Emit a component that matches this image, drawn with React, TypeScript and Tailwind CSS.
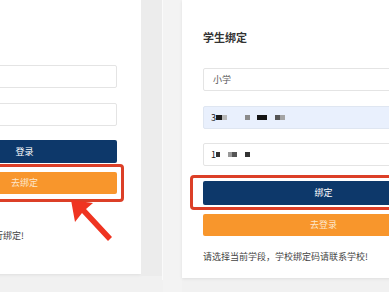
const font = { fontFamily: '"Noto Sans CJK SC", "Noto Sans", sans-serif' };

function Blob({ w, c, ml = 0 }: { w: number; c: string; ml?: number }) {
    return (
        <span
            className="inline-block h-[5px]"
            style={{ width: w, background: c, marginLeft: ml }}
        />
    );
}

function Field({
    children,
    tint,
}: {
    children?: React.ReactNode;
    tint?: boolean;
}) {
    return (
        <div
            className={
                'flex h-[23px] items-center rounded-[2px] border px-[7px] text-[9px] text-[#555] ' +
                (tint
                    ? 'border-[#dfe6f1] bg-[#e9f0fd]'
                    : 'border-[#e4e4e4] bg-white')
            }
        >
            {children}
        </div>
    );
}

function Highlight({ className }: { className: string }) {
    return (
        <div
            className={
                'pointer-events-none absolute rounded-[4px] border-[3px] border-[#dc3f27] ' +
                className
            }
        />
    );
}

export default function App() {
    return (
        <div
            className="relative flex h-[292px] w-[389px] overflow-hidden bg-[#f1f1f1]"
            style={font}
        >
            {/* left screenshot */}
            <div className="-ml-[159px] flex h-[274px] w-[300px] shrink-0 flex-col bg-white pt-[65px] pl-[21px] pr-[24px] shadow-[0_1px_3px_rgba(0,0,0,0.08)]">
                <Field />
                <div className="mt-[15px]">
                    <Field />
                </div>
                <div className="mt-[14px] flex h-[23px] items-center justify-center rounded-[2px] bg-[#0d386a] text-[9px] text-white">
                    <span className="ml-[70px]">登录</span>
                </div>
                <div className="relative mt-[9px]">
                    <div className="flex h-[22px] items-center justify-center rounded-[2px] bg-[#f8962c] text-[9px] text-[#fde7cc]">
                        <span className="ml-[70px]">去绑定</span>
                    </div>
                    <Highlight className="-top-[8px] -bottom-[8px] -left-[8px] -right-[7px]" />
                </div>
                <div className="mt-[36px] flex justify-end whitespace-nowrap pr-[93px] text-[9px] leading-[12px] text-[#444]">
                    请选择当前学段，学校绑定码请联系学校进行绑定!
                </div>
            </div>

            {/* gap */}
            <div className="h-[276px] w-[21px] shrink-0 bg-[#ececec]" />
            <div className="h-[280px] w-[1px] shrink-0 bg-[#fafafa]" />
            <div className="w-[19px] shrink-0 bg-[#f3f3f3]" />

            {/* right screenshot */}
            <div className="flex h-[278px] w-[260px] shrink-0 flex-col bg-white pt-[30px] pl-[21px] shadow-[0_1px_3px_rgba(0,0,0,0.08)]">
                <div className="h-[14px] text-[11px] font-bold leading-[14px] text-[#333]">
                    学生绑定
                </div>
                <div className="mt-[24px]">
                    <Field>
                        <span className="ml-[2px]">小学</span>
                    </Field>
                </div>
                <div className="mt-[15px]">
                    <Field tint>
                        <span className="text-[#222]">3</span>
                        <Blob w={6} c="#1a1a1a" />
                        <Blob w={5} c="#b8b8b8" />
                        <Blob w={5} c="#8a8a8a" ml={18} />
                        <Blob w={10} c="#141414" ml={7} />
                        <Blob w={5} c="#555" ml={8} />
                        <Blob w={5} c="#a4a4a4" />
                    </Field>
                </div>
                <div className="mt-[14px]">
                    <Field>
                        <span className="text-[#222]">1</span>
                        <Blob w={4} c="#333" />
                        <Blob w={4} c="#9a9a9a" ml={8} />
                        <Blob w={5} c="#555" />
                        <Blob w={5} c="#333" ml={8} />
                    </Field>
                </div>
                <div className="relative mt-[15px]">
                    <div className="flex h-[24px] items-center justify-center rounded-[2px] bg-[#0d386a] text-[9px] text-white">
                        <span className="ml-[2px]">绑定</span>
                    </div>
                    <Highlight className="-top-[6px] -bottom-[5px] -left-[13px] -right-[10px]" />
                </div>
                <div className="mt-[9px] flex h-[22px] items-center justify-center rounded-[2px] bg-[#f8962c] text-[9px] text-[#fde7cc]">
                    <span className="ml-[2px]">去登录</span>
                </div>
                <div className="mt-[15px] whitespace-nowrap text-[9px] leading-[12px] text-[#444]">
                    请选择当前学段，学校绑定码请联系学校!
                </div>
            </div>

            {/* arrow */}
            <svg
                className="absolute left-0 top-0"
                width="389"
                height="292"
                viewBox="0 0 389 292"
            >
                <polygon
                    points="71,200 93,203 86,209 112,237 108,241 82,213 75,222"
                    fill="#ef3421"
                />
            </svg>
        </div>
    );
}
